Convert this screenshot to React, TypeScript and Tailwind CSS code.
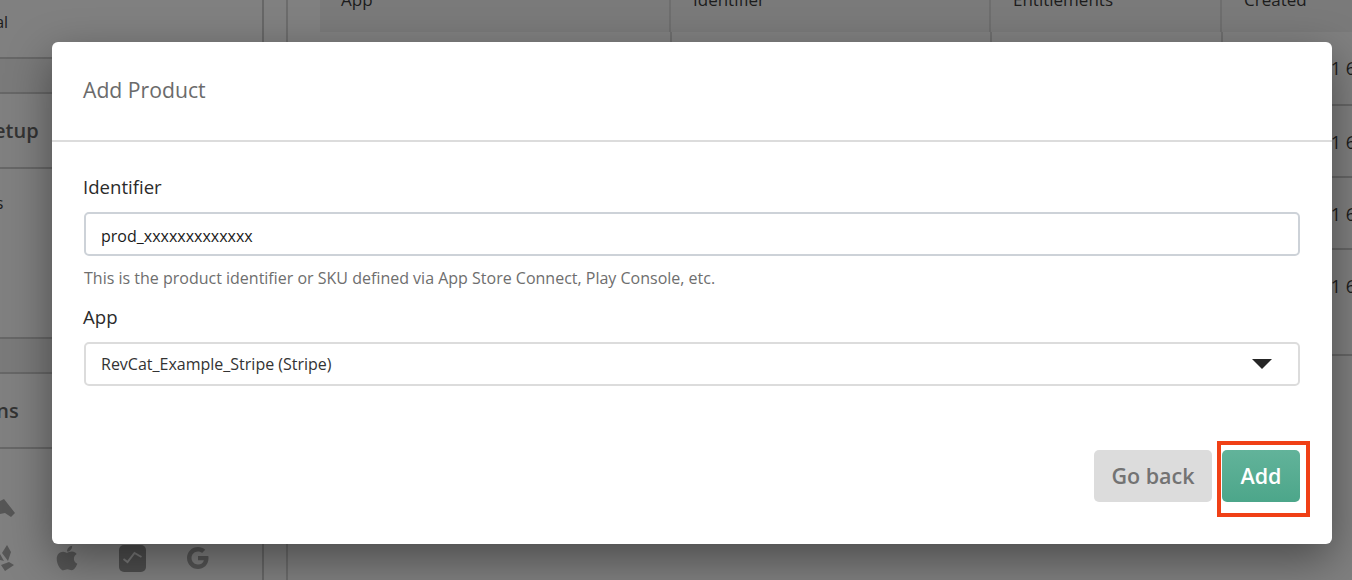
import React from "react";
import { FaApple } from "react-icons/fa";

const font = "font-['Open_Sans',sans-serif]";

function SideRow({ text, h, offset, bold, shade, align }: { text: string; h: string; offset: string; bold?: boolean; shade?: boolean; align?: string }) {
  return (
    <div className={`${h} flex ${align ?? "items-center"} border-b-2 border-[#676767] ${shade ? "bg-[#7a7a7a]" : ""}`}>
      <span className={`${offset} whitespace-nowrap ${bold ? "text-[20px] font-semibold text-[#333]" : "text-[16px] leading-[24px] text-[#1c1c1c]"}`}>{text}</span>
    </div>
  );
}

function TableRow({ h }: { h: string }) {
  return (
    <div className={`${h} flex border-b-2 border-[#676767]`}>
      <div className="w-[352px] border-r-2 border-[#6e6e6e]" />
      <div className="w-[320px] border-r-2 border-[#6e6e6e]" />
      <div className="w-[231px] border-r-2 border-[#6e6e6e]" />
      <div className="flex-1 flex justify-end pt-[24px]">
        <span className="text-[18px] leading-[24px] text-[#1c1c1c] whitespace-nowrap -mr-[4px]">1 6</span>
      </div>
    </div>
  );
}

export default function App() {
  return (
    <div className={`${font} relative h-[580px] w-[1352px] overflow-hidden bg-[#808080]`}>
      <div className="flex h-full">
        <aside className="w-[264px] shrink-0 border-r-2 border-[#676767] flex flex-col overflow-hidden">
          <SideRow text="Personal" h="h-[59px]" offset="-ml-[57px] mt-[10px]" align="items-start" />
          <SideRow text="" h="h-[35px]" offset="" shade />
          <SideRow text="Setup" h="h-[75px]" offset="-ml-[17px]" bold />
          <SideRow text="Products" h="h-[170px]" offset="-ml-[63px] mt-[22px]" align="items-start" />
          <SideRow text="" h="h-[35px]" offset="" shade />
          <SideRow text="Integrations" h="h-[75px]" offset="-ml-[99px]" bold />
          <div className="flex flex-col gap-[27px] pt-[50px]">
            <svg viewBox="0 0 16 18" className="h-[18px] w-[16px] fill-[#565656]"><path d="M0 2 L4 0 L15 14 L11 18 L5 14 L0 15Z" /></svg>
            <div className="flex items-center">
              <svg viewBox="0 0 16 28" className="w-[16px] h-[28px] fill-[#565656]"><path d="M7 1l4 7-3 9-6-8zM9 18l5 3-9 6-4-6zM0 10l4 7-4-1z" /></svg>
              <FaApple className="ml-[37px] h-[28px] w-[28px] text-[#565656]" />
              <div className="ml-[38px] flex h-[27px] w-[27px] items-center justify-center rounded-[5px] bg-[#4e4e4e]">
                <svg viewBox="0 0 21 14" className="h-[14px] w-[21px] fill-none stroke-[#7a7a7a] stroke-2"><path d="M1.5 8l4 3 7-9 7 4" /></svg>
              </div>
              <svg viewBox="0 0 48 48" className="ml-[40px] h-[24px] w-[24px] fill-[#565656]">
                <path d="M44.5 20H24v8.5h11.8C34.7 33.9 30.1 37 24 37c-7.2 0-13-5.8-13-13s5.8-13 13-13c3.1 0 5.9 1.1 8.1 2.9l6.4-6.4C34.6 4.1 29.6 2 24 2 11.8 2 2 11.8 2 24s9.8 22 22 22c11 0 21-8 21-22 0-1.3-.2-2.7-.5-4z" />
              </svg>
            </div>
          </div>
        </aside>
        <main className="ml-[22px] flex-1 border-l-2 border-[#6c6c6c] pl-[32px] overflow-hidden">
          <div className="flex h-[32px] bg-[#7a7a7a] text-[17px] leading-[24px] text-[#1c1c1c]">
            <div className="w-[351px] border-r-2 border-[#6e6e6e] pl-[21px]"><div className="-mt-[12px]">App</div></div>
            <div className="w-[320px] border-r-2 border-[#6e6e6e] pl-[22px]"><div className="-mt-[12px]">Identifier</div></div>
            <div className="w-[231px] border-r-2 border-[#6e6e6e] pl-[22px]"><div className="-mt-[12px]">Entitlements</div></div>
            <div className="flex-1 pl-[22px]"><div className="-mt-[12px]">Created</div></div>
          </div>
          <TableRow h="h-[74px]" />
          <TableRow h="h-[72px]" />
          <TableRow h="h-[72px]" />
          <TableRow h="h-[106px]" />
        </main>
      </div>

      <div className="absolute left-[52px] top-[42px] w-[1280px] h-[502px] rounded-[6px] bg-white shadow-[0_15px_45px_rgba(0,0,0,0.42)] flex flex-col">
        <div className="h-[100px] flex items-center pl-[31px] border-b-2 border-[#dcdcdc] pb-[2px]">
          <h2 className="text-[21.2px] text-[#6b6b6b] font-normal">Add Product</h2>
        </div>
        <div className="px-[32px] pt-[33px] flex flex-col">
          <label className="-ml-[1px] text-[18.6px] leading-[24px] text-[#2b2b2b]">Identifier</label>
          <div className="mt-[13px] h-[44px] rounded-[5px] border-2 border-[#cdd2d8] flex items-center pl-[15px] pt-[3px] text-[16px] text-[#1a1a1a]">prod_xxxxxxxxxxxxx</div>
          <p className="mt-[11px] text-[16px] leading-[22px] text-[#6e6e6e]">This is the product identifier or SKU defined via App Store Connect, Play Console, etc.</p>
          <label className="-ml-[1px] mt-[16px] text-[18.6px] leading-[24px] text-[#2b2b2b]">App</label>
          <div className="mt-[13px] h-[44px] rounded-[5px] border-2 border-[#dcdcdc] flex items-center justify-between pl-[15px] pr-[26px] text-[16px] text-[#333]">
            <span>RevCat_Example_Stripe (Stripe)</span>
            <svg viewBox="0 0 20 10" className="h-[10px] w-[20px] fill-[#262626]"><path d="M0 0h20L10 10z" /></svg>
          </div>
        </div>
        <div className="mt-[64px] flex justify-end pr-[32px] gap-[10px]">
          <button className="h-[52px] w-[118px] rounded-[5px] bg-[#dcdcdc] text-[21.5px] font-semibold text-[#737373]">Go back</button>
          <div className="relative">
            <button className="h-[52px] w-[78px] rounded-[5px] bg-gradient-to-b from-[#62b39a] to-[#4ca68a] text-[21.5px] font-semibold text-white">Add</button>
            <div className="absolute -left-[5px] -top-[9px] h-[76px] w-[93px] border-[4px] border-[#f04016]" />
          </div>
        </div>
      </div>
    </div>
  );
}
